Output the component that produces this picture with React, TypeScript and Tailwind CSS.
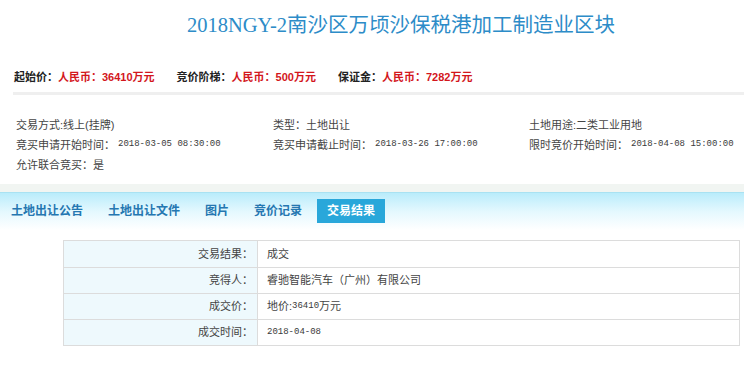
const cjk = "font-['Liberation_Sans','Noto_Sans_CJK_SC',sans-serif]";
const mono = "font-['Liberation_Mono','Noto_Sans_CJK_SC',monospace] text-[9px] text-[#3a3a3a]";

const prices = [
  { label: "起始价：", value: "人民币：36410万元" },
  { label: "竞价阶梯：", value: "人民币：500万元" },
  { label: "保证金：", value: "人民币：7282万元" },
];

const tabs = ["土地出让公告", "土地出让文件", "图片", "竞价记录", "交易结果"];

function Info({ label, date, text }: { label: string; date?: string; text?: string }) {
  return (
    <div className="flex items-center h-[20px] whitespace-nowrap">
      <span>{label}</span>
      {text && <span>{text}</span>}
      {date && <span className={`${mono} ml-[3px]`}>{date}</span>}
    </div>
  );
}

export default function App() {
  const rows: { label: string; value: React.ReactNode }[] = [
    { label: "交易结果：", value: "成交" },
    { label: "竞得人：", value: "睿驰智能汽车（广州）有限公司" },
    {
      label: "成交价：",
      value: (
        <>
          地价:<span className={mono}>36410</span>万元
        </>
      ),
    },
    { label: "成交时间：", value: <span className={mono}>2018-04-08</span> },
  ];

  return (
    <div className={`w-[744px] h-[369px] bg-white overflow-hidden ${cjk}`}>
      {/* title */}
      <div className="h-[60px] pt-[13px] pl-[58px] flex justify-center">
        <h1 className="font-['Liberation_Serif','Noto_Sans_CJK_SC',serif] text-[20.5px] leading-[24px] text-[#2d8cc8] whitespace-nowrap">
          2018NGY-2南沙区万顷沙保税港加工制造业区块
        </h1>
      </div>

      {/* price line */}
      <div className="ml-[13px] mt-[9px] pb-[7px] border-b-[3px] border-[#efefef] flex gap-[22px] pl-[1px] text-[11px] leading-[16px] font-bold">
        {prices.map((p) => (
          <span key={p.label} className="whitespace-nowrap">
            <span className="text-[#222]">{p.label}</span>
            <span className="text-[#d3161c]">{p.value}</span>
          </span>
        ))}
      </div>

      {/* info */}
      <div className="grid grid-cols-[257px_256px_1fr] pl-[16px] pt-[20px] text-[11px] text-[#444]">
        <Info label="交易方式:" text="线上(挂牌)" />
        <Info label="类型：" text="土地出让" />
        <Info label="土地用途:" text="二类工业用地" />
        <Info label="竞买申请开始时间：" date="2018-03-05 08:30:00" />
        <Info label="竞买申请截止时间：" date="2018-03-26 17:00:00" />
        <Info label="限时竞价开始时间：" date="2018-04-08 15:00:00" />
        <Info label="允许联合竞买：" text="是" />
      </div>

      <div className="mt-[9px] h-[8px] bg-[#f1f5f2]" />

      {/* tabs */}
      <div className="h-[38px] border-t border-[#a9e2f2] bg-gradient-to-b from-[#b9ecfb] via-[#e4f8fe] to-white pt-[6px]">
        <div className="flex gap-[5px] pl-[1px]">
          {tabs.map((t, i) => (
            <div
              key={t}
              className={`h-[24px] px-[10px] flex items-center text-[12px] font-bold ${
                i === tabs.length - 1 ? "bg-[#29a7da] text-white" : "text-[#2577b1]"
              }`}
            >
              {t}
            </div>
          ))}
        </div>
      </div>

      {/* result table */}
      <div className="ml-[63px] mr-[4px] mt-[10px] border border-[#dcdcdc] text-[11px] text-[#444]">
        {rows.map((r, i) => (
          <div
            key={r.label}
            className={`grid grid-cols-[194px_1fr] h-[26px] ${i > 0 ? "border-t border-[#dcdcdc]" : ""}`}
          >
            <div className="bg-[#eef9fd] border-r border-[#dcdcdc] flex items-center justify-end pr-[4px]">
              {r.label}
            </div>
            <div className="flex items-center pl-[9px]">{r.value}</div>
          </div>
        ))}
      </div>
    </div>
  );
}
